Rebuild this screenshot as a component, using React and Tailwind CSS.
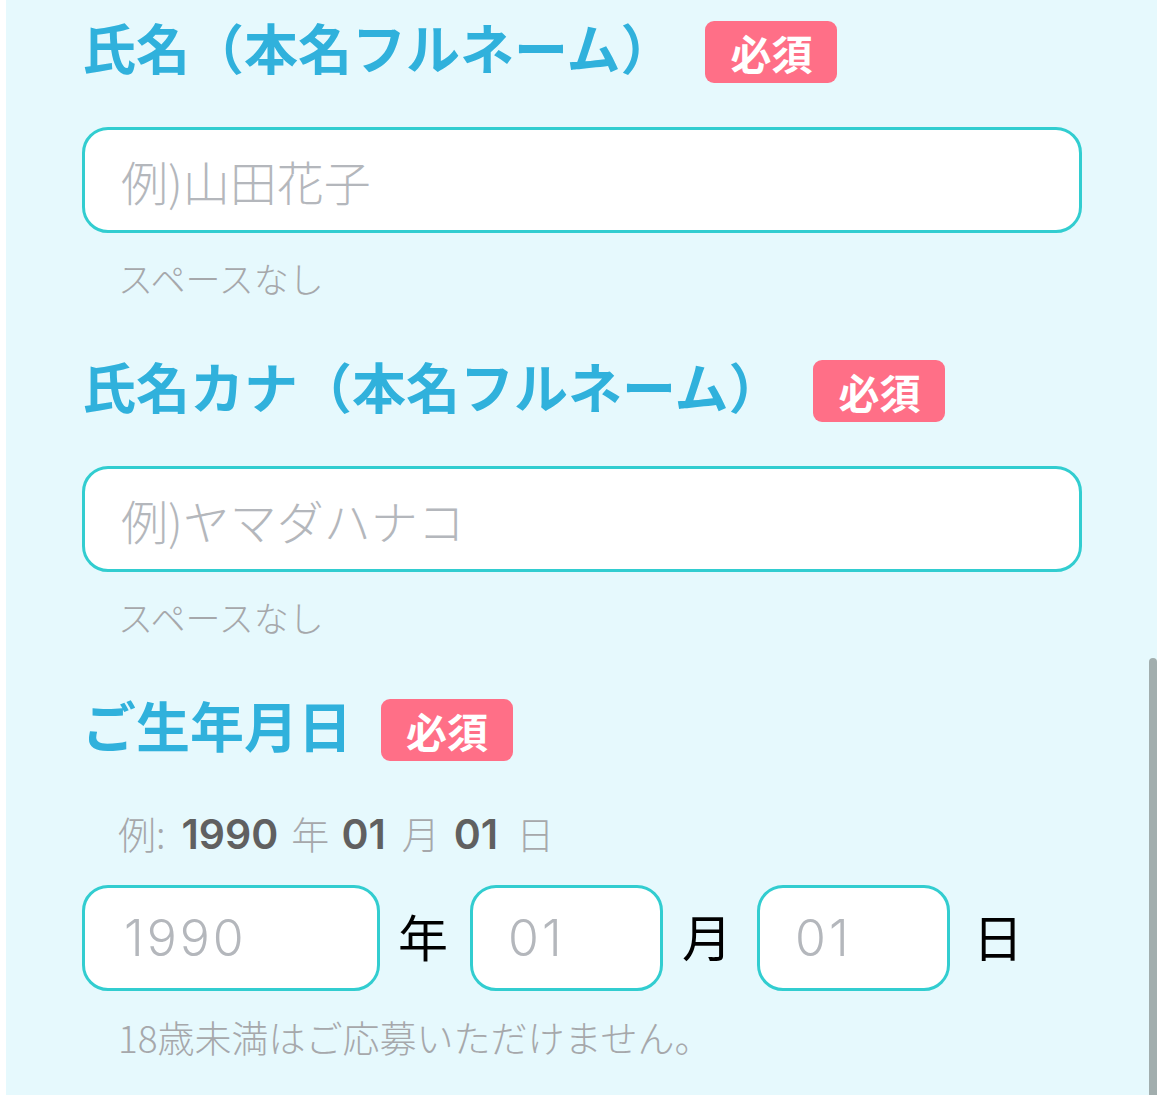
import React from "react";

const jp = { fontFamily: '"Noto Sans CJK JP", "Noto Sans", sans-serif' };
const num = { fontFamily: 'Inter, "Noto Sans", sans-serif' };

function Badge({ className = "" }) {
  return (
    <span
      className={`flex h-[62px] w-[132px] shrink-0 items-center justify-center rounded-[9px] bg-[#ff6f87] text-[41px] font-bold leading-none text-white ${className}`}
    >
      必須
    </span>
  );
}

function Heading({ text, badgeClass }) {
  return (
    <div className="flex h-[62px] items-center">
      <h2 className="mb-[11px] text-[54px] font-bold leading-none text-[#30b1dc]">{text}</h2>
      <Badge className={badgeClass} />
    </div>
  );
}

function TextInput({ placeholder }) {
  return (
    <div className="mt-[44px] flex h-[106px] w-[1000px] items-center rounded-[26px] border-[3px] border-[#32cdd0] bg-white pl-[36px]">
      <span className="text-[47px] font-light leading-none text-[#b4b7bc]">{placeholder}</span>
    </div>
  );
}

function Note({ children, className = "" }) {
  return (
    <p className={`pl-[36px] font-light leading-[40px] text-[#a6a8ab] ${className}`}>{children}</p>
  );
}

function DateBox({ w, pl, value }) {
  return (
    <div className={`flex h-[106px] items-center rounded-[26px] border-[3px] border-[#32cdd0] bg-white ${w} ${pl}`}>
      <span className="text-[50px] font-light leading-none tracking-[3px] text-[#b4b7bc]" style={num}>{value}</span>
    </div>
  );
}

export default function App() {
  return (
    <div className="flex h-[1095px] w-[1167px] overflow-hidden bg-white" style={jp}>
      <div className="w-[6px] shrink-0 bg-white" />
      <div className="relative flex-1 bg-[#e6f9fd] pl-[76px] pt-[21px]">
        <section>
          <Heading text="氏名（本名フルネーム）" badgeClass="ml-[31px]" />
          <TextInput placeholder="例)山田花子" />
          <Note className="mt-[25px] text-[35px]">スペースなし</Note>
        </section>

        <section className="mt-[62px]">
          <Heading text="氏名カナ（本名フルネーム）" badgeClass="ml-[31px]" />
          <TextInput placeholder="例)ヤマダハナコ" />
          <Note className="mt-[25px] text-[35px]">スペースなし</Note>
        </section>

        <section className="mt-[62px]">
          <Heading text="ご生年月日" badgeClass="ml-[29px]" />
          <p className="mt-[50px] flex items-baseline pl-[36px] text-[38px] leading-[44px]">
            <span className="font-light text-[#a6a8ab]">例:</span>
            <span className="ml-[16px] text-[41px] font-semibold text-[#606060]" style={num}>1990</span>
            <span className="ml-[13px] font-light text-[#a6a8ab]">年</span>
            <span className="ml-[12px] text-[41px] font-semibold text-[#606060]" style={num}>01</span>
            <span className="ml-[16px] font-light text-[#a6a8ab]">月</span>
            <span className="ml-[14px] text-[41px] font-semibold text-[#606060]" style={num}>01</span>
            <span className="ml-[18px] font-light text-[#a6a8ab]">日</span>
          </p>
          <div className="mt-[29px] flex items-center">
            <DateBox w="w-[298px]" pl="pl-[39px]" value="1990" />
            <span className="mb-[6px] ml-[18px] text-[50px] leading-none text-black">年</span>
            <div className="ml-[22px]">
              <DateBox w="w-[193px]" pl="pl-[35px]" value="01" />
            </div>
            <span className="mb-[6px] ml-[19px] text-[50px] leading-none text-black">月</span>
            <div className="ml-[25px]">
              <DateBox w="w-[193px]" pl="pl-[35px]" value="01" />
            </div>
            <span className="mb-[6px] ml-[23px] text-[50px] leading-none text-black">日</span>
          </div>
          <Note className="mt-[26px] text-[37px]">18歳未満はご応募いただけません。</Note>
        </section>

        <div className="absolute bottom-0 right-0 top-[658px] w-[8px] rounded-t-full bg-[#a2aeae]" />
      </div>
      <div className="w-[10px] shrink-0 bg-white" />
    </div>
  );
}
